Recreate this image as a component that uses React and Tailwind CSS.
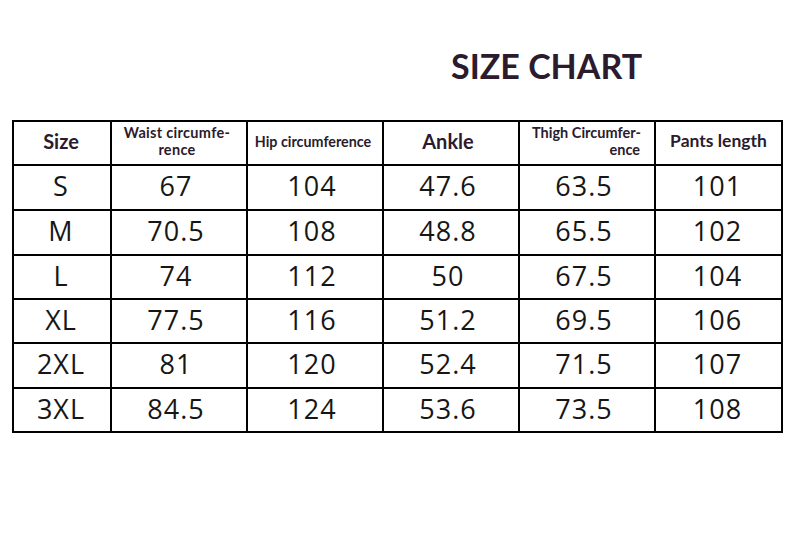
import React from 'react';

const rows = [
  ['S', '67', '104', '47.6', '63.5', '101'],
  ['M', '70.5', '108', '48.8', '65.5', '102'],
  ['L', '74', '112', '50', '67.5', '104'],
  ['XL', '77.5', '116', '51.2', '69.5', '106'],
  ['2XL', '81', '120', '52.4', '71.5', '107'],
  ['3XL', '84.5', '124', '53.6', '73.5', '108'],
];

const heights = ['h-[45px]', 'h-[45px]', 'h-[44px]', 'h-[44px]', 'h-[45px]', 'h-[44px]'];

export default function App() {
  return (
    <div className="w-[790px] h-[550px] bg-white overflow-hidden">
      {/* title */}
      <div className="pt-[44px] pl-[451px] h-[120px]">
        <h1 className="text-[34px] leading-[44px] font-bold text-[#2b1b2c]" style={{ fontFamily: 'Lato, sans-serif' }}>
          SIZE CHART
        </h1>
      </div>

      <table className="ml-[12px] border-collapse border-2 border-black table-fixed w-[769px]">
        <colgroup>
          <col className="w-[98px]" />
          <col className="w-[136px]" />
          <col className="w-[136px]" />
          <col className="w-[136px]" />
          <col className="w-[136px]" />
          <col className="w-[127px]" />
        </colgroup>
        <thead>
          <tr className="h-[44px] text-[#2b1b2c] font-bold" style={{ fontFamily: 'Lato, sans-serif' }}>
            <th className="border-2 border-black text-[20px] p-0 pb-[4px] pr-[2px]">Size</th>
            <th className="border-2 border-black text-[14.5px] leading-[17px] tracking-[0.3px] p-0 pb-[4px] pr-[4px]">
              Waist circumfe-<br />rence
            </th>
            <th className="border-2 border-black text-[14.3px] p-0 pb-[2px] pr-[4px]">Hip circumference</th>
            <th className="border-2 border-black text-[20px] p-0 pb-[4px] pr-[6px]">Ankle</th>
            <th className="border-2 border-black text-[14.5px] leading-[17px] p-0 pb-[4px]">
              <div className="pl-[12px] text-left">Thigh Circumfer-</div>
              <div className="text-right pr-[14px]">ence</div>
            </th>
            <th className="border-2 border-black text-[17.5px] p-0 pb-[4px]">Pants length</th>
          </tr>
        </thead>
        <tbody className="text-[#161616] text-[27px] tracking-[1px]" style={{ fontFamily: '"Open Sans", sans-serif' }}>
          {rows.map((r, i) => (
            <tr key={r[0]} className={heights[i]}>
              {r.map((c, j) => (
                <td
                  key={j}
                  className={
                    j > 0 && j < 5
                      ? 'border-2 border-black text-center p-0 pb-[4px] pr-[6px] leading-none'
                      : 'border-2 border-black text-center p-0 pb-[4px] pr-[2px] leading-none'
                  }
                >
                  {c}
                </td>
              ))}
            </tr>
          ))}
        </tbody>
      </table>
    </div>
  );
}
